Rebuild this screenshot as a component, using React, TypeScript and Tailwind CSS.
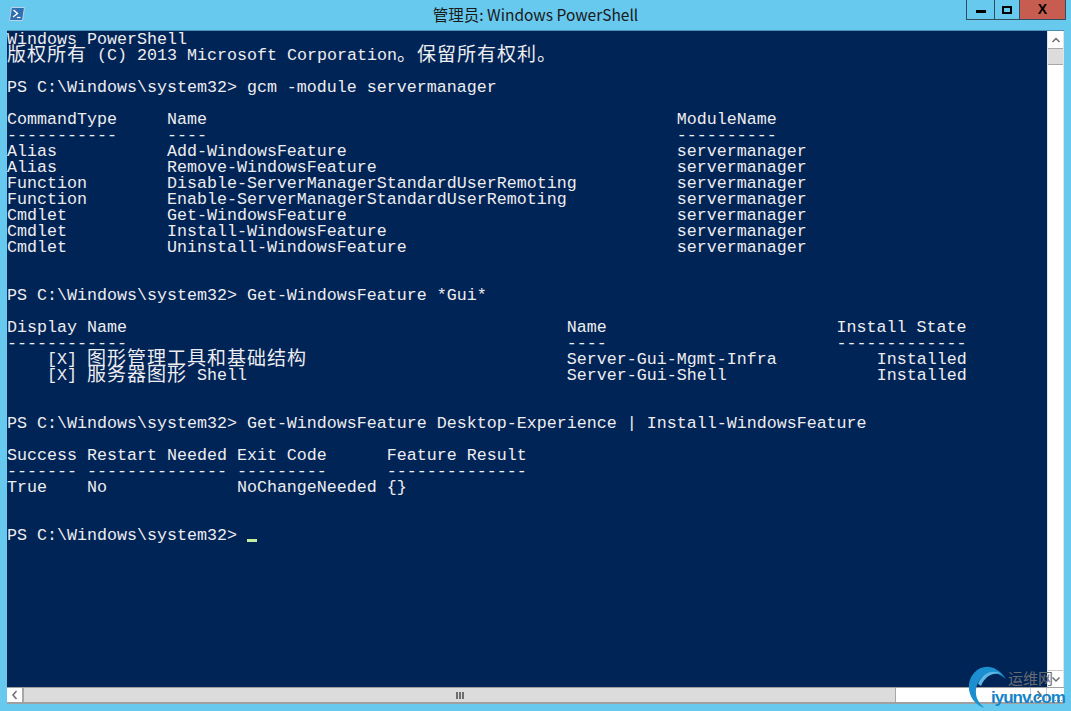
const mono = "font-['Liberation_Mono','Noto_Sans_CJK_SC',monospace]";

const lines: string[] = [
  "Windows PowerShell",
  "版权所有 (C) 2013 Microsoft Corporation。保留所有权利。",
  "",
  "PS C:\\Windows\\system32> gcm -module servermanager",
  "",
  "CommandType     Name                                               ModuleName",
  "-----------     ----                                               ----------",
  "Alias           Add-WindowsFeature                                 servermanager",
  "Alias           Remove-WindowsFeature                              servermanager",
  "Function        Disable-ServerManagerStandardUserRemoting          servermanager",
  "Function        Enable-ServerManagerStandardUserRemoting           servermanager",
  "Cmdlet          Get-WindowsFeature                                 servermanager",
  "Cmdlet          Install-WindowsFeature                             servermanager",
  "Cmdlet          Uninstall-WindowsFeature                           servermanager",
  "",
  "",
  "PS C:\\Windows\\system32> Get-WindowsFeature *Gui*",
  "",
  "Display Name                                            Name                       Install State",
  "------------                                            ----                       -------------",
  "    [X] 图形管理工具和基础结构                          Server-Gui-Mgmt-Infra          Installed",
  "    [X] 服务器图形 Shell                                Server-Gui-Shell               Installed",
  "",
  "",
  "PS C:\\Windows\\system32> Get-WindowsFeature Desktop-Experience | Install-WindowsFeature",
  "",
  "Success Restart Needed Exit Code      Feature Result",
  "------- -------------- ---------      --------------",
  "True    No             NoChangeNeeded {}",
  "",
  "",
  "PS C:\\Windows\\system32> ",
];

// CJK cells are two columns wide, so they get their own span
const Line = ({ text, cursor }: { text: string; cursor?: boolean }) => {
  const parts = text.split(/([\u3000-\u9fff]+)/);
  return (
    <div className="h-4 whitespace-pre leading-4">
      {parts.map((p, i) =>
        /[\u3000-\u9fff]/.test(p) ? (
          <span key={i} className="text-[19px] tracking-[1px] leading-[0] align-[-1px]">{p}</span>
        ) : (
          <span key={i}>{p}</span>
        )
      )}
      {cursor && <span className="inline-block w-[10px] h-[3px] bg-[#c4eda0] align-[-2px]"></span>}
    </div>
  );
};

const ScrollBtn = ({ d, className }: { d: string; className: string }) => (
  <div className={"flex items-center justify-center bg-white " + className}>
    <svg width="10" height="10" viewBox="0 0 10 10" fill="none" stroke="#6d6d6d" strokeWidth="1.5">
      <path d={d} />
    </svg>
  </div>
);

const App = () => {
  return (
    <div className="w-[1071px] h-[711px] flex flex-col bg-[#67c9ee] overflow-hidden relative">
      {/* 타이틀바 */}
      <div className="h-[30px] flex items-start">
        <div className="flex-1 pl-[9px] pt-[7px]">
          <svg width="16" height="14" viewBox="0 0 16 14">
            <path d="M2.5 .5H15.5L13.5 13.5H.5Z" fill="#2f6fb0" stroke="#b9d3ea" />
            <path d="M4.5 3L8.5 6.5L4 10" fill="none" stroke="#fff" strokeWidth="1.4" />
            <path d="M8 10.5H11.5" stroke="#fff" strokeWidth="1.2" />
          </svg>
        </div>
        <div className="pr-[9px] text-[15.5px] leading-[29px] text-[#1a1a1a] font-['Noto_Sans_CJK_SC','Liberation_Sans',sans-serif]">
          管理员: Windows PowerShell
        </div>
        <div className="flex-1 flex justify-end">
          <div className="flex h-[20px] mr-[5px] border-b border-x border-[#2f4f5f]">
            <div className="w-[27px] flex items-center justify-center">
              <div className="w-[10px] h-[3px] mt-[4px] bg-black"></div>
            </div>
            <div className="w-[26px] flex items-center justify-center border-x border-[#2f4f5f]">
              <div className="w-[10px] h-[8px] border-2 border-black"></div>
            </div>
            <div className="w-[45px] flex items-center justify-center bg-[#c75c50] text-black font-bold text-[14px] font-['Liberation_Sans',sans-serif]">
              X
            </div>
          </div>
        </div>
      </div>

      {/* 콘솔 영역 */}
      <div className="flex-1 min-h-0 mx-[7px] flex border-t border-[#4a8fb4]">
        <div className={"flex-1 pt-px bg-[#012456] text-[#eeedf0] text-[16.67px] " + mono}>
          {lines.map((l, i) => (
            <Line key={i} text={l} cursor={i === lines.length - 1} />
          ))}
        </div>
        <div className="w-[17px] flex flex-col bg-white border-x border-[#e3e3e3]">
          <ScrollBtn d="M1.5 7L5 3.5L8.5 7" className="h-[17px]" />
          <div className="h-[17px] bg-[#dcdcdc] border-y border-[#a8a8a8]"></div>
          <div className="flex-1"></div>
          <ScrollBtn d="M1.5 3.5L5 7L8.5 3.5" className="h-[17px] border-t border-[#c8c8c8]" />
        </div>
      </div>

      {/* 가로 스크롤바 */}
      <div className="h-[17px] mb-[7px] mx-[7px] flex bg-white border-t border-b-2 border-t-[#a0a0a0] border-b-[#a0a0a0]">
        <ScrollBtn d="M6.5 1L3 5L6.5 9" className="w-[17px] border-r-2 border-[#a8a8a8]" />
        <div className="w-[872px] flex items-center justify-center bg-[#dcdcdc] border-r border-[#a8a8a8]">
          <div className="flex gap-[1px]">
            <div className="w-[2px] h-[7px] bg-[#6d6d6d]"></div>
            <div className="w-[2px] h-[7px] bg-[#6d6d6d]"></div>
            <div className="w-[2px] h-[7px] bg-[#6d6d6d]"></div>
          </div>
        </div>
        <div className="flex-1"></div>
        <ScrollBtn d="M3.5 1L7 5L3.5 9" className="w-[17px] border-x border-[#c8c8c8]" />
        <div className="w-[17px] flex items-end justify-end pr-[2px] pb-[1px]">
          <div className="w-[9px] h-[3px] border-b border-dotted border-[#8a8a8a]"></div>
        </div>
      </div>

      {/* 워터마크 */}
      <div className="absolute left-[967px] top-[664px] w-[104px] h-[47px]">
        <svg width="60" height="47" viewBox="0 0 60 47" fill="none" className="absolute left-0 top-0">
          <path d="M18 44C2 40-3 20 7 9C15 0 29 0 39 15C28 6 18 7 12 17C6 27 9 38 18 44Z" fill="#1b8fcf" />
          <path d="M11 20C15 9 26 5 35 10C26 8 18 12 14 22Z" fill="#5bb7e6" />
        </svg>
        <div className="absolute left-[41px] top-[4px] text-[15px] leading-[20px] text-[#6a6a72] font-['Noto_Sans_CJK_SC',sans-serif]">运维网</div>
        <div className="absolute left-[24px] top-[24px] text-[17px] tracking-[-1px] leading-[20px] font-bold text-[#1484c8] font-['Liberation_Sans',sans-serif]">iyunv.com</div>
      </div>
    </div>
  );
};

export default App;
